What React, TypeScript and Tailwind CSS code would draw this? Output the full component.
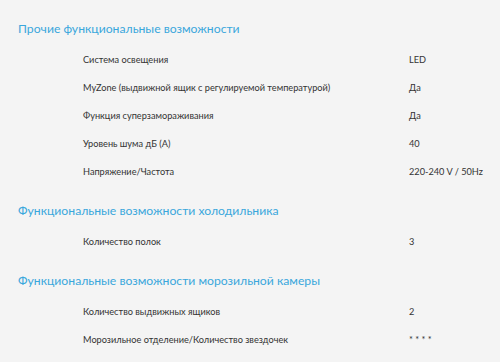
import React from "react";

type Row = [string, string];
const sections: { title: string; rows: Row[] }[] = [
  {
    title: "Прочие функциональные возможности",
    rows: [
      ["Система освещения", "LED"],
      ["MyZone (выдвижной ящик с регулируемой температурой)", "Да"],
      ["Функция суперзамораживания", "Да"],
      ["Уровень шума дБ (A)", "40"],
      ["Напряжение/Частота", "220-240 V / 50Hz"],
    ],
  },
  {
    title: "Функциональные возможности холодильника",
    rows: [["Количество полок", "3"]],
  },
  {
    title: "Функциональные возможности морозильной камеры",
    rows: [
      ["Количество выдвижных ящиков", "2"],
      ["Морозильное отделение/Количество звездочек", "* * * *"],
    ],
  },
];

export default function App() {
  return (
    <div
      className="w-[500px] h-[362px] bg-[#f4f4f4] pt-[19px] pl-[18px] overflow-hidden"
      style={{ fontFamily: "Lato, 'Open Sans', sans-serif" }}
    >
      {sections.map((s, i) => (
        <div key={i} className={i > 0 ? "mt-[15px]" : ""}>
          <h2 className="h-[20px] leading-[20px] text-[12.2px] text-[#3aa7dc]">{s.title}</h2>
          <div className="mt-[7px]">
            {s.rows.map((r, j) => (
              <div key={j} className="flex h-[28px] items-center text-[9.2px] text-[#333333]">
                <div className="w-[391px] pl-[65px]">{r[0]}</div>
                <div>{r[1]}</div>
              </div>
            ))}
          </div>
        </div>
      ))}
    </div>
  );
}
